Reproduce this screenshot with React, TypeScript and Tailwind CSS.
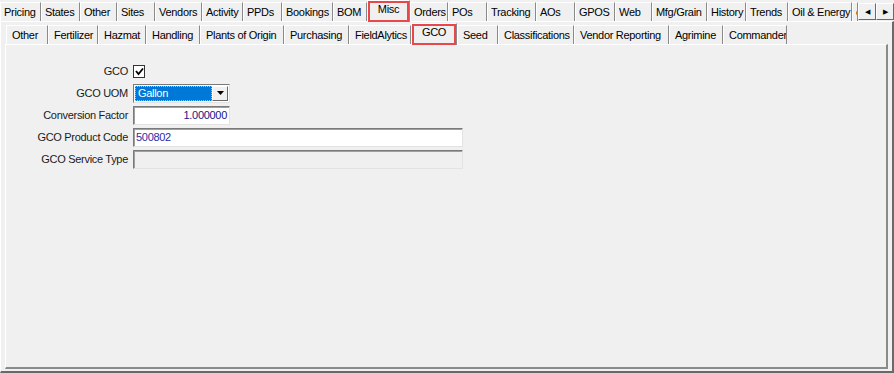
import React from 'react';

type Tab = { label: string; w: number; selected?: boolean };

const topTabs: Tab[] = [
  { label: 'Pricing', w: 41 },
  { label: 'States', w: 39 },
  { label: 'Other', w: 37 },
  { label: 'Sites', w: 38 },
  { label: 'Vendors', w: 47 },
  { label: 'Activity', w: 41 },
  { label: 'PPDs', w: 39 },
  { label: 'Bookings', w: 51 },
  { label: 'BOM', w: 34 },
  { label: 'Misc', w: 43, selected: true },
  { label: 'Orders', w: 38 },
  { label: 'POs', w: 39 },
  { label: 'Tracking', w: 49 },
  { label: 'AOs', w: 39 },
  { label: 'GPOS', w: 40 },
  { label: 'Web', w: 37 },
  { label: 'Mfg/Grain', w: 55 },
  { label: 'History', w: 39 },
  { label: 'Trends', w: 42 },
  { label: 'Oil & Energy', w: 64 },
  { label: 'e', w: 6 },
];

const subTabs: Tab[] = [
  { label: 'Other', w: 42 },
  { label: 'Fertilizer', w: 50 },
  { label: 'Hazmat', w: 48 },
  { label: 'Handling', w: 54 },
  { label: 'Plants of Origin', w: 84 },
  { label: 'Purchasing', w: 65 },
  { label: 'FieldAlytics', w: 62 },
  { label: 'GCO', w: 46, selected: true },
  { label: 'Seed', w: 41 },
  { label: 'Classifications', w: 76 },
  { label: 'Vendor Reporting', w: 95 },
  { label: 'Agrimine', w: 54 },
  { label: 'Commander', w: 64 },
];

const TabButton: React.FC<{ tab: Tab; pad: string }> = ({ tab, pad }) => (
  <div
    className={`relative flex-shrink-0 overflow-hidden whitespace-nowrap bg-[#f0f0f0] border-l border-l-white border-t border-t-white border-r border-r-[#8a8a8a] ${
      tab.selected ? 'h-[22px] pt-[1px] z-10 mb-[-1px] text-center' : `h-[19px] pt-[2px] ${pad}`
    }`}
    style={{ width: tab.w }}
  >
    {tab.label}
    {tab.selected && <div className="absolute inset-0 border-2 border-[#e8474c] pointer-events-none"></div>}
  </div>
);

const Label: React.FC<{ children: React.ReactNode }> = ({ children }) => (
  <div className="w-[128px] text-right pr-[1px] text-[#1a1a1a]">{children}</div>
);

const boxCls = 'border border-[#7a7a7a] border-b-[#e3e3e3] border-r-[#e3e3e3] shadow-[inset_1px_1px_0_#a0a0a0]';

export default function App() {
  return (
    <div
      className="relative w-[894px] h-[373px] overflow-hidden bg-[#f0f0f0] text-[11px] leading-[15px] tracking-[-0.3px] text-black"
      style={{ fontFamily: '"Liberation Sans", Arial, sans-serif' }}
    >
      {/* Top tab strip */}
      <div className="flex items-end h-[21px]">
        {topTabs.map(t => (
          <TabButton key={t.label} tab={t} pad="pl-[3px]" />
        ))}
        <div className="flex h-[19px] items-start pt-[1px]">
          {['◀', '▶'].map(a => (
            <div
              key={a}
              className="w-[18px] h-[17px] flex items-center justify-center bg-[#f0f0f0] border border-t-white border-l-white border-r-[#696969] border-b-[#696969] text-[7px]"
            >
              {a}
            </div>
          ))}
        </div>
      </div>

      {/* Outer page */}
      <div className="h-[352px] border-t border-l border-t-white border-l-white border-r-2 border-b-2 border-r-[#696969] border-b-[#696969] px-[4px] pt-[1px]">
        {/* Sub tab strip */}
        <div className="flex items-end h-[21px] pl-[1px]">
          {subTabs.map(t => (
            <TabButton key={t.label} tab={t} pad="pl-[5px]" />
          ))}
        </div>

        {/* Inner page */}
        <div className="h-[325px] border-t border-l border-t-white border-l-white border-r-2 border-b-2 border-r-[#8a8a8a] border-b-[#8a8a8a] pt-[16px]">
          <div className="flex flex-col gap-[2px]">
            <div className="flex items-center gap-[4px] h-[20px] -ml-[5px]">
              <Label>GCO</Label>
              <div className="w-[12px] h-[13px] bg-white border border-[#333] flex items-center justify-center">
                <svg width="9" height="9" viewBox="0 0 9 9">
                  <path d="M1 4 L3.5 7 L8 1.5" fill="none" stroke="#000" strokeWidth="1.8" />
                </svg>
              </div>
            </div>

            <div className="flex items-center gap-[4px] h-[20px] -ml-[5px]">
              <Label>GCO UOM</Label>
              <div className="w-[97px] h-[19px] flex bg-white border border-[#7a7a7a] border-b-[#e3e3e3] border-r-[#e3e3e3] p-[1px]">
                <div className="flex-1 bg-[#0078d7] text-white pl-[2px] border border-dotted border-[#f7b055] leading-[13px]">
                  Gallon
                </div>
                <div className="w-[16px] h-full bg-[#f0f0f0] border border-t-white border-l-white border-r-[#696969] border-b-[#696969] flex items-center justify-center">
                  <svg width="7" height="4" viewBox="0 0 7 4">
                    <path d="M0 0 H7 L3.5 4 Z" fill="#000" />
                  </svg>
                </div>
              </div>
            </div>

            <div className="flex items-center gap-[4px] h-[20px] -ml-[5px]">
              <Label>Conversion Factor</Label>
              <div className={`w-[97px] h-[19px] bg-white text-right pr-[2px] text-[#14148a] leading-[17px] ${boxCls}`}>
                1.000000
              </div>
            </div>

            <div className="flex items-center gap-[4px] h-[20px] -ml-[5px]">
              <Label>GCO Product Code</Label>
              <div className={`w-[330px] h-[19px] bg-white pl-[2px] text-[#2a2aa8] leading-[17px] ${boxCls}`}>
                500802
              </div>
            </div>

            <div className="flex items-center gap-[4px] h-[20px] -ml-[5px]">
              <Label>GCO Service Type</Label>
              <div className={`w-[330px] h-[19px] bg-[#f0f0f0] ${boxCls}`}></div>
            </div>
          </div>
        </div>
      </div>
    </div>
  );
}
